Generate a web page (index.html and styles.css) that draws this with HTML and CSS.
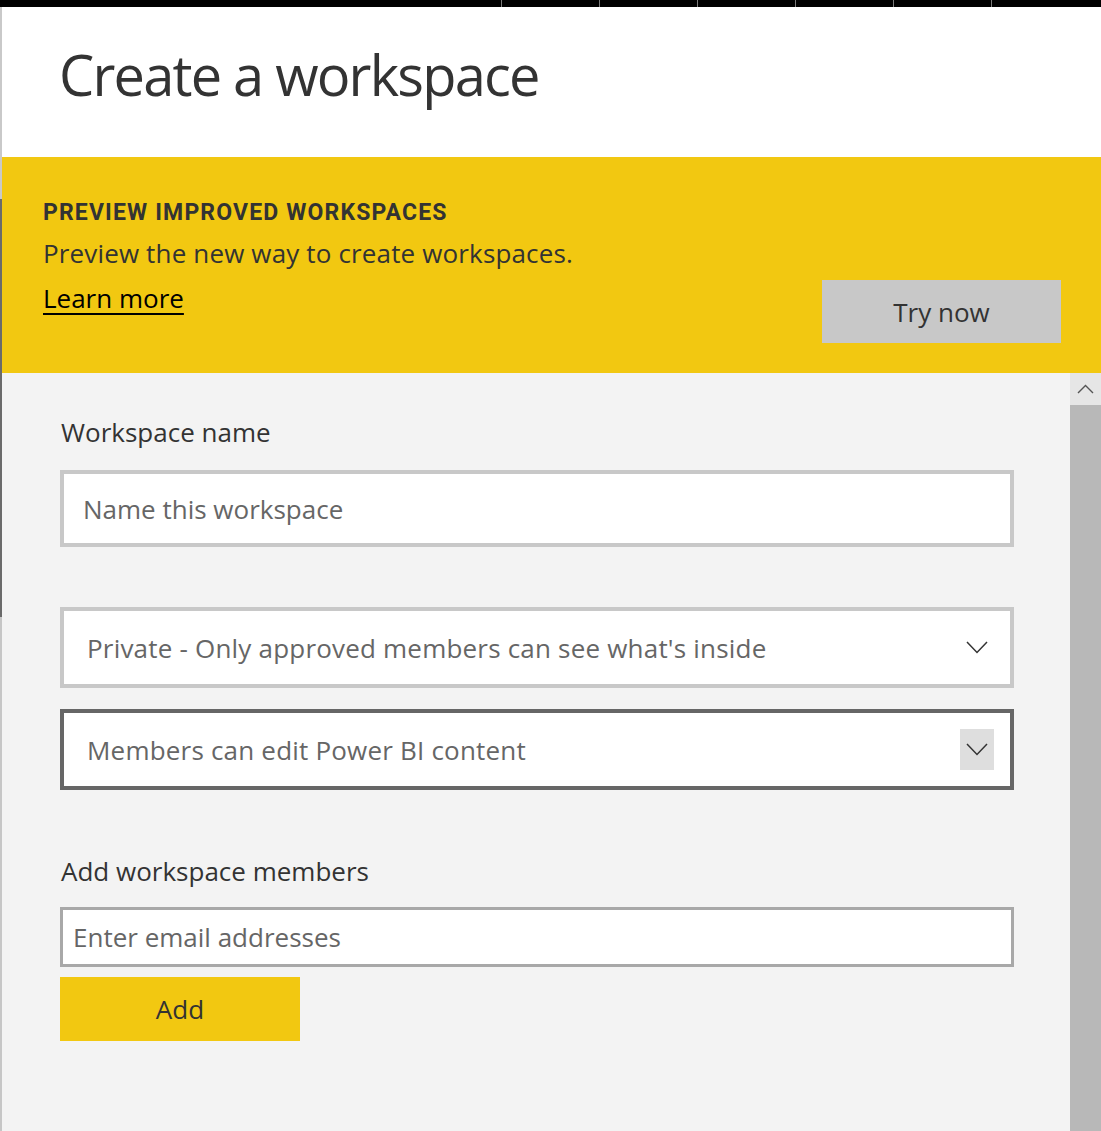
FILE: index.html
```html
<!DOCTYPE html>
<html lang="en">
<head>
<meta charset="utf-8">
<title>Create a workspace</title>
<link rel="stylesheet" href="styles.css">
</head>
<body>
<div class="topbar">
  <div class="tb-lead"></div>
  <div class="tb-seg"></div>
  <div class="tb-seg"></div>
  <div class="tb-seg"></div>
  <div class="tb-seg"></div>
  <div class="tb-seg"></div>
  <div class="tb-seg tb-last"></div>
</div>
<div class="frame">
  <div class="edge"></div>
  <div class="panel">
    <header class="header">
      <h1 class="title">Create a workspace</h1>
    </header>
    <section class="banner">
      <div class="banner-text">
        <div class="banner-heading">PREVIEW IMPROVED WORKSPACES</div>
        <div class="banner-desc">Preview the new way to create workspaces.</div>
        <a class="banner-link" href="#">Learn more</a>
      </div>
      <button class="try-btn" type="button">Try now</button>
    </section>
    <div class="body">
      <div class="form">
        <label class="label label-name">Workspace name</label>
        <div class="input input-name"><span class="placeholder">Name this workspace</span></div>
        <div class="dropdown dropdown-privacy">
          <span class="dd-text">Private - Only approved members can see what's inside</span>
          <span class="dd-chevron">
            <svg width="22" height="13" viewBox="0 0 22 13"><polyline points="1,1 11,11.5 21,1" fill="none" stroke="#333" stroke-width="1.5"/></svg>
          </span>
        </div>
        <div class="dropdown dropdown-edit">
          <span class="dd-text">Members can edit Power BI content</span>
          <span class="dd-chevron dd-chevron-hover">
            <svg width="22" height="13" viewBox="0 0 22 13"><polyline points="1,1 11,11.5 21,1" fill="none" stroke="#333" stroke-width="1.5"/></svg>
          </span>
        </div>
        <label class="label label-members">Add workspace members</label>
        <div class="input input-email"><span class="placeholder">Enter email addresses</span></div>
        <button class="add-btn" type="button">Add</button>
      </div>
      <div class="scrollbar">
        <div class="sb-up">
          <svg width="17" height="10" viewBox="0 0 17 10"><polyline points="1,9 8.5,1.5 16,9" fill="none" stroke="#555" stroke-width="1.4"/></svg>
        </div>
        <div class="sb-thumb"></div>
      </div>
    </div>
  </div>
</div>
</body>
</html>
```

FILE: styles.css
```css
html, body {
  margin: 0;
  padding: 0;
  height: 100%;
}
body {
  font-family: "Open Sans", "Noto Sans", sans-serif;
  color: #333;
  background: #f3f3f3;
  overflow: hidden;
}
.topbar {
  display: flex;
  height: 7px;
  background: #000;
}
.tb-lead {
  width: 501px;
  flex: none;
}
.tb-seg {
  width: 97px;
  flex: none;
  border-left: 1px solid #7a7a7a;
}
.tb-last {
  flex: 1;
}
.frame {
  display: flex;
  height: 1124px;
}
.edge {
  width: 2px;
  flex: none;
  background: linear-gradient(to bottom, #c9c9c9 0, #c9c9c9 192px, #6a6a6a 192px, #6a6a6a 610px, #c6c6c6 610px);
}
.panel {
  flex: 1;
  display: flex;
  flex-direction: column;
  min-width: 0;
}
.header {
  height: 150px;
  background: #fff;
  box-sizing: border-box;
  padding: 31px 0 0 57px;
}
.title {
  margin: 0;
  font-weight: 400;
  font-size: 56px;
  line-height: 72px;
  color: #333;
  letter-spacing: -1.8px;
}
.banner {
  height: 216px;
  box-sizing: border-box;
  background: #f2c811;
  display: flex;
  justify-content: space-between;
  align-items: flex-end;
  padding: 42px 40px 30px 41px;
}
.banner-text {
  align-self: flex-start;
  display: flex;
  flex-direction: column;
  align-items: flex-start;
}
.banner-heading {
  font-family: "Roboto", "Liberation Sans", sans-serif;
  font-weight: 700;
  font-size: 23px;
  line-height: 28px;
  color: #333;
  letter-spacing: 1.15px;
}
.banner-desc {
  margin-top: 8px;
  font-size: 26px;
  line-height: 36px;
  color: #333;
  letter-spacing: 0.15px;
}
.banner-link {
  margin-top: 9px;
  font-size: 26px;
  line-height: 36px;
  color: #000;
  text-decoration: underline;
  text-decoration-thickness: 2px;
  text-underline-offset: 5px;
}
.try-btn {
  width: 239px;
  height: 63px;
  border: none;
  background: #c8c8c8;
  color: #333;
  font-family: inherit;
  font-size: 26px;
  padding: 0;
}
.body {
  flex: 1;
  display: flex;
  min-height: 0;
}
.form {
  flex: 1;
  padding: 41px 56px 0 58px;
  display: flex;
  flex-direction: column;
}
.label {
  display: block;
  font-size: 26px;
  line-height: 36px;
  color: #333;
  margin-left: 1px;
}
.input {
  background: #fff;
  box-sizing: border-box;
  display: flex;
  align-items: center;
}
.placeholder {
  font-size: 26px;
  color: #666;
}
.input-name {
  margin-top: 20px;
  height: 77px;
  border: 4px solid #c8c8c8;
  padding-left: 19px;
}
.dropdown {
  box-sizing: border-box;
  height: 81px;
  background: #fff;
  display: flex;
  align-items: center;
  justify-content: space-between;
  padding: 0 16px 0 23px;
}
.dd-text {
  font-size: 26px;
  color: #666;
  letter-spacing: 0.2px;
}
.dropdown-privacy {
  margin-top: 60px;
  border: 4px solid #c8c8c8;
}
.dropdown-edit {
  margin-top: 21px;
  border: 4px solid #666;
}
.dd-chevron {
  width: 34px;
  height: 41px;
  display: flex;
  align-items: center;
  justify-content: center;
}
.dd-chevron-hover {
  background: #dedede;
}
.label-members {
  margin-top: 63px;
}
.input-email {
  margin-top: 18px;
  height: 60px;
  border: 3px solid #a8a8a8;
  padding-left: 10px;
}
.add-btn {
  margin-top: 10px;
  width: 240px;
  height: 64px;
  border: none;
  background: #f2c811;
  color: #333;
  font-family: inherit;
  font-size: 26px;
  padding: 0;
}
.scrollbar {
  width: 31px;
  flex: none;
  display: flex;
  flex-direction: column;
}
.sb-up {
  height: 32px;
  background: #e6e6e6;
  display: flex;
  align-items: center;
  justify-content: center;
}
.sb-thumb {
  flex: 1;
  background: #b8b8b8;
}
```
